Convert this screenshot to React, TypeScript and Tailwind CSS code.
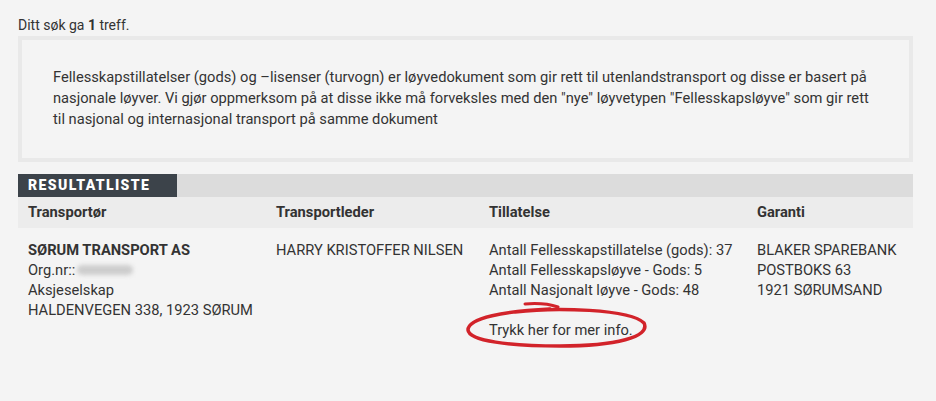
import React from 'react'

const font = { fontFamily: 'Roboto, "Noto Sans", sans-serif' }

const InfoBox = () => (
  <div className="mt-[1px] mr-[23px] ml-[18px] border-4 border-[#e9e9e9] bg-[#f4f4f4] pt-[27px] pr-[26px] pb-[28px] pl-[31px]">
    <p className="text-[14.7px] leading-[21px] text-[#333]">
      Fellesskapstillatelser (gods) og –lisenser (turvogn) er løyvedokument som gir rett til utenlandstransport og disse er basert på
      nasjonale løyver. Vi gjør oppmerksom på at disse ikke må forveksles med den "nye" løyvetypen "Fellesskapsløyve" som gir rett
      til nasjonal og internasjonal transport på samme dokument
    </p>
  </div>
)

// red hand-drawn marker round the link
const RedCircle = () => (
  <svg className="pointer-events-none absolute left-[-24px] top-[-19px]" width="186" height="50" viewBox="0 0 186 50">
    <path
      d="M50 11 C 90 6, 165 8, 179 22 C 186 36, 150 45, 95 45 C 45 45, 4 40, 3 29 C 3 17, 40 10, 85 8"
      fill="none"
      stroke="#d2232a"
      strokeWidth="3.5"
      strokeLinecap="round"
    />
    <path d="M60 3 C 72 2, 84 3, 93 6" fill="none" stroke="#d2232a" strokeWidth="3" strokeLinecap="round" />
  </svg>
)

export default function App() {
  return (
    <div className="min-h-[401px] w-[936px] bg-[#f4f4f4] pt-[15px] text-[#333]" style={font}>
      <p className="ml-[18px] text-[14px] leading-[20px]">
        Ditt søk ga <b>1</b> treff.
      </p>
      <InfoBox />

      <div className="mt-[12px] mr-[23px] ml-[18px]">
        <div className="flex h-[23px] bg-[#dcdcdc]">
          <div className="flex w-[159px] items-center bg-[#3c434a] pl-[10px] text-[14px] font-black tracking-[1.4px] text-white">
            RESULTATLISTE
          </div>
        </div>
        <div className="grid h-[31px] grid-cols-[248px_213px_268px_1fr] items-center bg-[#ececec] px-[10px] text-[14.7px] font-bold">
          <div>Transportør</div>
          <div>Transportleder</div>
          <div>Tillatelse</div>
          <div>Garanti</div>
        </div>
        <div className="grid grid-cols-[248px_213px_268px_1fr] px-[10px] pt-[12px] text-[14.7px] leading-[20px]">
          <div>
            <div className="font-bold">SØRUM TRANSPORT AS</div>
            <div className="flex items-center">
              Org.nr::
              <span className="ml-[2px] inline-block h-[10px] w-[56px] rounded-full bg-[#cdcdcd] blur-[2px]" />
            </div>
            <div>Aksjeselskap</div>
            <div>HALDENVEGEN 338, 1923 SØRUM</div>
          </div>
          <div>HARRY KRISTOFFER NILSEN</div>
          <div>
            <div>Antall Fellesskapstillatelse (gods): 37</div>
            <div>Antall Fellesskapsløyve - Gods: 5</div>
            <div>Antall Nasjonalt løyve - Gods: 48</div>
            <div className="relative mt-[20px] inline-block">
              <RedCircle />
              <span>Trykk her for mer info.</span>
            </div>
          </div>
          <div>
            <div>BLAKER SPAREBANK</div>
            <div>POSTBOKS 63</div>
            <div>1921 SØRUMSAND</div>
          </div>
        </div>
      </div>
    </div>
  )
}
